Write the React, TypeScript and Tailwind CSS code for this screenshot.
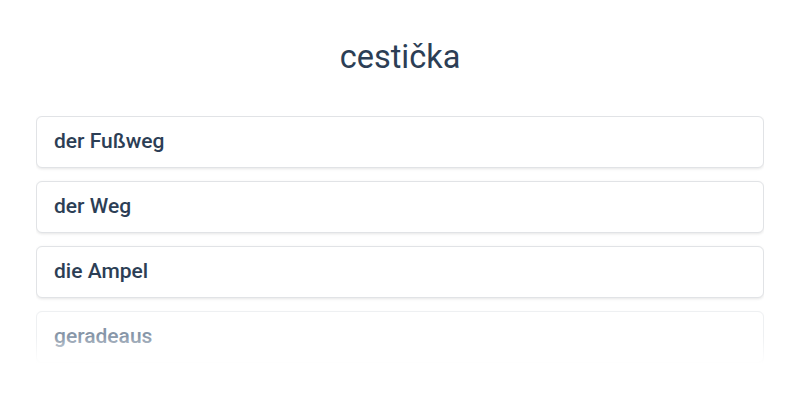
const words = ['der Fußweg', 'der Weg', 'die Ampel', 'geradeaus'];

export default function App() {
    return (
        <div className="min-h-[400px] bg-white px-9 pt-[38px] text-[#2c3e55]" style={{ fontFamily: 'Roboto, "Noto Sans", sans-serif' }}>
            <h1 className="text-center text-[32.5px] leading-[38px] font-normal">cestička</h1>

            {/* Word list, last item fades out */}
            <div className="relative mt-[40px] h-[248px] overflow-hidden">
                <div className="flex flex-col gap-[13px]">
                    {words.map((w, i) => {
                        const last = i === words.length - 1;
                        return (
                            <div
                                key={w}
                                className={`flex h-[52px] items-center rounded-md border bg-white px-[17px] ${last ? 'border-[#eef0f2] shadow-[0_1px_3px_rgba(0,0,0,0.05)]' : 'border-[#e1e3e6] shadow-[0_1px_3px_rgba(0,0,0,0.1)]'}`}
                            >
                                <span className={`text-[21px] font-medium ${last ? 'text-[#8796a8]' : ''}`}>{w}</span>
                            </div>
                        );
                    })}
                </div>
                <div className="pointer-events-none absolute inset-x-0 bottom-0 h-[28px] bg-gradient-to-b from-white/0 to-white" />
            </div>
        </div>
    );
}
